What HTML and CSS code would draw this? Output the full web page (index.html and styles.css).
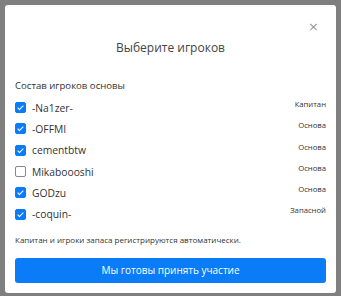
FILE: index.html
```html
<!DOCTYPE html>
<html lang="ru">
<head>
  <meta charset="UTF-8" />
  <title>Выберите игроков</title>
  <link rel="stylesheet" href="styles.css">
</head>
<body>

  <div class="backdrop">
    <div class="modal">
      <div class="modal-head">
        <button class="close">&times;</button>
        <h2>Выберите игроков</h2>
      </div>

      <div class="modal-body">
        <p class="section">Состав игроков основы</p>

        <ul class="players">
          <li><span class="box checked"></span><span class="name">-Na1zer-</span><span class="role">Капитан</span></li>
          <li><span class="box checked"></span><span class="name">-OFFMI</span><span class="role">Основа</span></li>
          <li><span class="box checked"></span><span class="name">cementbtw</span><span class="role">Основа</span></li>
          <li><span class="box"></span><span class="name">Mikaboooshi</span><span class="role">Основа</span></li>
          <li><span class="box checked"></span><span class="name">GODzu</span><span class="role">Основа</span></li>
          <li><span class="box checked"></span><span class="name">-coquin-</span><span class="role">Запасной</span></li>
        </ul>

        <p class="note">Капитан и игроки запаса регистрируются автоматически.</p>

        <button class="submit">Мы готовы принять участие</button>
      </div>
    </div>
  </div>

</body>
</html>
```

FILE: styles.css
```css
body {
  margin: 0;
  font-family: 'Open Sans', 'Noto Sans', sans-serif;
  color: #333;
  background: #7f7f7f;
}

.backdrop {
  height: 296px;
  padding: 5px 5px 0 5px;
  box-sizing: border-box;
}

.modal {
  background: white;
  width: 331px;
  height: 288px;
  border-radius: 3px;
  box-sizing: border-box;
  padding: 0 10px;
}

.modal-head {
  padding-top: 17px;
  height: 58px;
  box-sizing: border-box;
  text-align: center;
}

.close {
  float: right;
  border: none;
  background: none;
  padding: 0;
  margin: 0 7px 0 0;
  font-size: 13px;
  line-height: 10px;
  color: #999;
  font-family: 'DejaVu Sans', sans-serif;
}

.modal-head h2 {
  clear: both;
  margin: 0;
  padding-top: 8px;
  font-size: 12px;
  line-height: 16px;
  font-weight: 400;
  color: #444;
}

.section {
  margin: 15px 0 0;
  font-size: 9.6px;
  line-height: 16px;
  color: #333;
}

.players {
  list-style: none;
  margin: 3px 0 0;
  padding: 0;
}

.players li {
  display: flex;
  align-items: center;
  height: 21.3px;
  font-size: 10.3px;
}

.box {
  width: 11px;
  height: 11px;
  border: 1px solid #888;
  border-radius: 2px;
  box-sizing: border-box;
  margin-right: 6px;
  position: relative;
}

.box.checked {
  background: #0a7cf8;
  border-color: #0a7cf8;
}

.box.checked::after {
  content: "";
  position: absolute;
  left: 3px;
  top: 1px;
  width: 2px;
  height: 5px;
  border: solid white;
  border-width: 0 1.5px 1.5px 0;
  transform: rotate(45deg);
}

.name {
  flex: 1;
  color: #333;
}

.role {
  font-size: 7.7px;
  color: #333;
  align-self: flex-start;
  margin-top: 2px;
}

.note {
  margin: 9px 0 0;
  font-size: 8px;
  line-height: 12px;
  color: #333;
}

.submit {
  display: block;
  width: 100%;
  margin-top: 12px;
  height: 25px;
  border: none;
  border-radius: 3px;
  background: #0a7cf8;
  color: white;
  font-family: inherit;
  font-size: 10px;
}
```
